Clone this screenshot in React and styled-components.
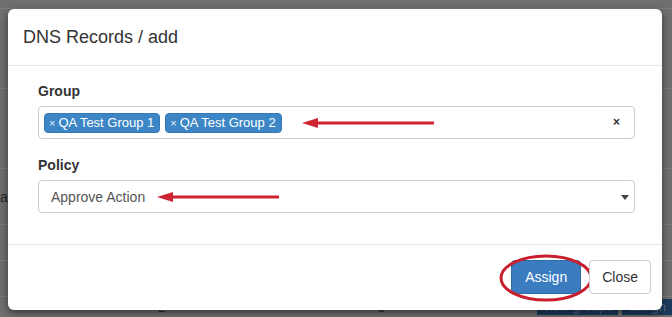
import React from 'react'
import styled, { createGlobalStyle } from 'styled-components'

const GlobalStyle = createGlobalStyle`
  html, body {
    margin: 0;
    padding: 0;
    background: #6e6e6e;
  }
  body {
    font-family: "Liberation Sans", Arial, Helvetica, sans-serif;
    font-size: 14px;
    color: #333;
  }
`

const Page = styled.div`
  position: relative;
  width: 672px;
  height: 317px;
  overflow: hidden;
  background: #6f6f6f;
`

// dimmed page content behind the modal
const Backdrop = styled.div`
  display: flex;
  flex-direction: column;
  padding-top: 8px;
`

const BgRow = styled.div`
  height: ${p => p.h}px;
  box-sizing: border-box;
  border-top: 1px solid #7c7c7c;
  display: flex;
  align-items: center;
  color: #2a2a2a;
  font-size: 14px;
`

const BgCell = styled.span`
  padding-left: ${p => p.pad || 0}px;
`

const BgButtons = styled.div`
  display: flex;
  gap: 4px;
  margin-left: auto;
`

const BgBtn = styled.span`
  background: #1d3b5c;
  color: #55708e;
  font-size: 13px;
  line-height: 16px;
  padding: 0 6px;
`

const Modal = styled.div`
  position: absolute;
  left: 8px;
  top: 9px;
  width: 654px;
  height: 301px;
  background: #fff;
  border-radius: 6px;
  box-shadow: 0 3px 9px rgba(0, 0, 0, 0.5);
  display: flex;
  flex-direction: column;
`

const Header = styled.div`
  padding: 15px;
  border-bottom: 1px solid #e5e5e5;
`

const Title = styled.h4`
  margin: 0;
  font-size: 18px;
  font-weight: normal;
  line-height: 26px;
  color: #333;
`

const Body = styled.div`
  padding: 15px 27px 31px 30px;
  display: flex;
  flex-direction: column;
  gap: 16px;
  border-bottom: 1px solid #e5e5e5;
`

const Field = styled.div`
  display: flex;
  flex-direction: column;
`

const Label = styled.label`
  font-weight: bold;
  font-size: 14px;
  line-height: 20px;
  margin-bottom: 5px;
  color: #333;
`

const Box = styled.div`
  position: relative;
  height: 33px;
  border: 1px solid #ccc;
  border-radius: 4px;
  box-sizing: border-box;
  display: flex;
  align-items: center;
  padding: 0 ${p => p.padX || 5}px;
  gap: 5px;
`

const Tag = styled.span`
  display: inline-flex;
  align-items: center;
  height: 20px;
  padding: 0 5px 0 4px;
  background: #3c86c6;
  border: 1px solid #3578b3;
  border-radius: 4px;
  box-sizing: border-box;
  color: #fff;
  font-size: 13px;
`

const TagX = styled.span`
  font-size: 11px;
  margin-right: 3px;
  color: #e6eef7;
`

const ClearX = styled.span`
  position: absolute;
  right: 14px;
  top: 8px;
  font-size: 12px;
  font-weight: bold;
  color: #333;
`

const SelectText = styled.span`
  color: #555;
  font-size: 14px;
`

const Caret = styled.span`
  position: absolute;
  right: 5px;
  top: 14px;
  border-left: 4px solid transparent;
  border-right: 4px solid transparent;
  border-top: 5px solid #444;
`

const Arrow = styled.svg`
  position: absolute;
  left: ${p => p.x}px;
  top: ${p => p.y}px;
  overflow: visible;
`

const Footer = styled.div`
  flex: 1;
  display: flex;
  justify-content: flex-end;
  align-items: flex-start;
  gap: 8px;
  padding: 15px 11px 0 0;
`

const Button = styled.button`
  position: relative;
  height: 34px;
  padding: 0 ${p => (p.primary ? 13 : 12)}px;
  font-family: "Liberation Sans", Arial, sans-serif;
  font-size: 14px;
  border-radius: 4px;
  border: 1px solid ${p => (p.primary ? '#2e6da4' : '#ccc')};
  background: ${p => (p.primary ? '#3a7cbf' : '#fff')};
  color: ${p => (p.primary ? '#fff' : '#333')};
`

const Ring = styled.svg`
  position: absolute;
  left: -12px;
  top: -6px;
  overflow: visible;
  pointer-events: none;
`

const RedArrow = ({ x, y, len }) => (
  <Arrow x={x} y={y} width={len} height={12}>
    <line x1="12" y1="6" x2={len} y2="6" stroke="#cf2533" strokeWidth="3" />
    <polygon points="0,6 16,1 16,11" fill="#cf2533" />
  </Arrow>
)

export default function App() {
  return (
    <Page>
      <GlobalStyle />
      <Backdrop>
        <BgRow h={80} />
        <BgRow h={80} />
        <BgRow h={56}>
          <BgCell>ai</BgCell>
        </BgRow>
        <BgRow h={36} />
        <BgRow h={36} />
        <BgRow h={21}>
          <BgCell pad={158}>2</BgCell>
          <BgCell pad={212}>0</BgCell>
          <BgButtons>
            <BgBtn>view groups</BgBtn>
            <BgBtn>assign</BgBtn>
          </BgButtons>
        </BgRow>
      </Backdrop>

      <Modal>
        <Header>
          <Title>DNS Records / add</Title>
        </Header>
        <Body>
          <Field>
            <Label>Group</Label>
            <Box>
              <Tag>
                <TagX>×</TagX>QA Test Group 1
              </Tag>
              <Tag>
                <TagX>×</TagX>QA Test Group 2
              </Tag>
              <ClearX>×</ClearX>
              <RedArrow x={263} y={10} len={132} />
            </Box>
          </Field>
          <Field>
            <Label>Policy</Label>
            <Box padX={12}>
              <SelectText>Approve Action</SelectText>
              <Caret />
              <RedArrow x={118} y={10} len={122} />
            </Box>
          </Field>
        </Body>
        <Footer>
          <Button primary>
            Assign
            <Ring width="93" height="46">
              <ellipse cx="46" cy="23" rx="45" ry="22" fill="none" stroke="#c81e2e" strokeWidth="3" />
            </Ring>
          </Button>
          <Button>Close</Button>
        </Footer>
      </Modal>
    </Page>
  )
}
